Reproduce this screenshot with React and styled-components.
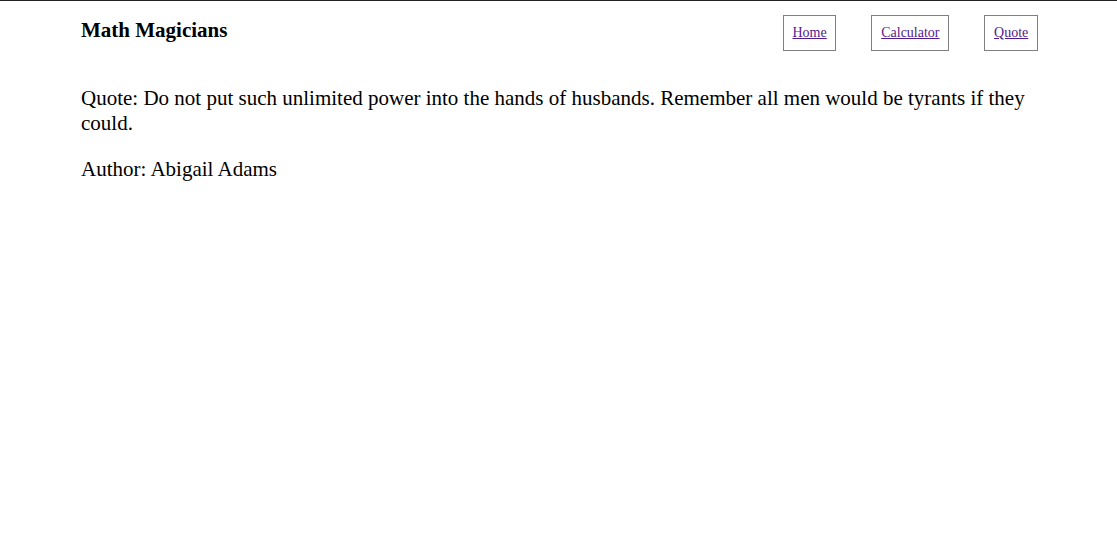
import React from "react";
import styled, { createGlobalStyle } from "styled-components";

const Global = createGlobalStyle`
  html, body { margin: 0; padding: 0; background: #fff; }
  body {
    font-family: "Liberation Serif", "Times New Roman", serif;
    color: #000;
    border-top: 1px solid #222;
  }
`;

const Page = styled.div`
  padding: 0 79px 0 81px;
`;

const Header = styled.header`
  display: flex;
  justify-content: space-between;
  align-items: flex-start;
  padding-top: 14px;
`;

const Title = styled.h1`
  margin: 0;
  padding-top: 3px;
  font-size: 21px;
  font-weight: bold;
  line-height: normal;
`;

const Nav = styled.nav`
  display: flex;
  gap: 35px;
`;

const NavLink = styled.a`
  display: block;
  border: 1px solid #808080;
  padding: 9px 8.75px;
  font-size: 14px;
  line-height: 16px;
  color: #551a8b;
  text-decoration: underline;
`;

const Main = styled.main`
  padding-top: 35px;
`;

const Para = styled.p`
  margin: 0 0 21px 0;
  font-size: 21px;
  line-height: normal;
`;

export default function App() {
  return (
    <>
      <Global />
      <Page>
        <Header>
          <Title>Math Magicians</Title>
          <Nav>
            <NavLink href="#/">Home</NavLink>
            <NavLink href="#/calculator">Calculator</NavLink>
            <NavLink href="#/quote">Quote</NavLink>
          </Nav>
        </Header>
        <Main>
          <Para>
            Quote: Do not put such unlimited power into the hands of husbands. Remember all men would be tyrants if they could.
          </Para>
          <Para>Author: Abigail Adams</Para>
        </Main>
      </Page>
    </>
  );
}
